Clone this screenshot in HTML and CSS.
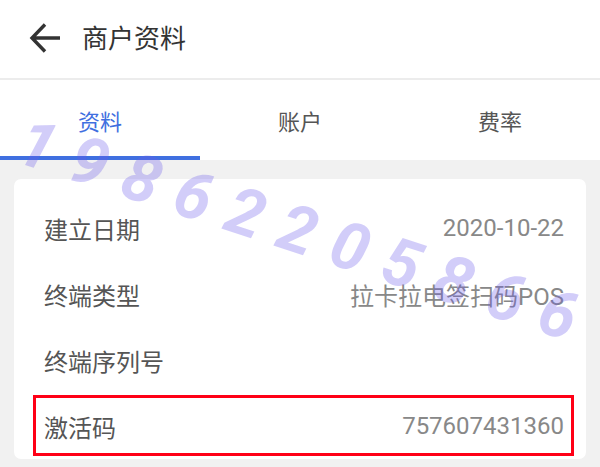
FILE: index.html
```html
<!DOCTYPE html>
<html lang="zh-CN">
<head>
  <meta charset="UTF-8">
  <meta name="viewport" content="width=device-width, initial-scale=1.0">
  <title>商户资料</title>
  <link rel="stylesheet" href="styles.css">
</head>
<body>
  <!-- Top bar -->
  <div class="topbar">
    <svg class="back" viewBox="0 0 32 32" width="32" height="32">
      <path d="M31 16H3 M16 2.5L3 16l13 13.5" fill="none" stroke="#333" stroke-width="3.4"/>
    </svg>
    <span class="title">商户资料</span>
  </div>

  <!-- Tabs -->
  <div class="tabs">
    <div class="tab active">资料</div>
    <div class="tab">账户</div>
    <div class="tab">费率</div>
  </div>

  <!-- Info card -->
  <div class="content">
    <div class="card">
      <div class="row">
        <span class="label">建立日期</span>
        <span class="value">2020-10-22</span>
      </div>
      <div class="row">
        <span class="label">终端类型</span>
        <span class="value">拉卡拉电签扫码POS</span>
      </div>
      <div class="row">
        <span class="label">终端序列号</span>
        <span class="value"></span>
      </div>
      <div class="row marked">
        <span class="label">激活码</span>
        <span class="value">757607431360</span>
      </div>
    </div>
  </div>

  <div class="watermark">19862205866</div>
</body>
</html>
```

FILE: styles.css
```css
* {
  box-sizing: border-box;
}

body {
  margin: 0;
  width: 600px;
  height: 467px;
  overflow: hidden;
  font-family: Roboto, "Noto Sans CJK SC", sans-serif;
  background-color: #f1f1f1;
  position: relative;
}

.topbar {
  height: 78px;
  background-color: #fff;
  display: flex;
  align-items: center;
  padding-left: 29px;
  border-bottom: 2px solid #ececec;
  box-sizing: content-box;
}

.back {
  display: block;
  margin-top: -3px;
}

.title {
  margin-left: 21px;
  font-size: 26px;
  color: #333;
  margin-top: -6px;
}

.tabs {
  height: 80px;
  display: flex;
  background-color: #fff;
}

.tab {
  flex: 1;
  display: flex;
  align-items: center;
  justify-content: center;
  padding-top: 3px;
  padding-bottom: 4px;
  font-size: 22px;
  color: #555;
}

.tab.active {
  color: #3f6fe0;
  border-bottom: 4px solid #3f6fe0;
  padding-bottom: 0;
}

.content {
  padding: 19px 14px 0;
}

.card {
  background-color: #fff;
  border-radius: 7px;
  padding: 16px 22px 0 30px;
}

.row {
  height: 66px;
  display: flex;
  align-items: center;
  justify-content: space-between;
  font-size: 24px;
  position: relative;
}

.label {
  color: #555;
}

.value {
  color: #888;
}

.row.marked::after {
  content: "";
  position: absolute;
  left: -11px;
  right: -10px;
  top: 2px;
  bottom: 3px;
  border: 3px solid #ff0016;
}

.watermark {
  position: absolute;
  left: 20px;
  top: 101px;
  font-size: 66px;
  font-weight: bold;
  font-style: italic;
  letter-spacing: 18px;
  color: rgba(105, 90, 235, 0.3);
  transform: rotate(18deg);
  transform-origin: 0 50%;
  white-space: nowrap;
  pointer-events: none;
}
```
